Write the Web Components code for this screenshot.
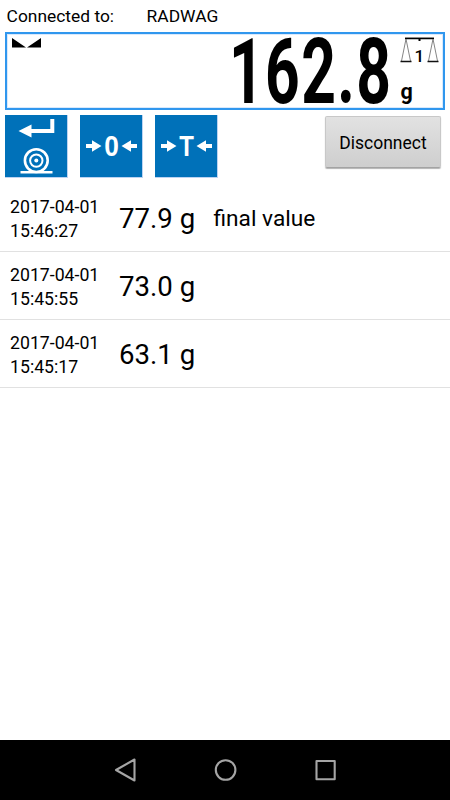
<!DOCTYPE html>
<html lang="en">
<head>
<meta charset="utf-8">
<title>Scale terminal</title>
<style>
    body {
        margin: 0;
        background: #fff;
        color: #000;
        font-family: Roboto, "Liberation Sans", sans-serif;
    }
</style>
</head>
<body>
<scale-app>
    <connection-bar slot="top" device="RADWAG"></connection-bar>
    <weight-display slot="top" value="162.8" unit="g" platform="1"></weight-display>
    <scale-toolbar slot="top"></scale-toolbar>
    <weight-record date="2017-04-01" time="15:46:27" value="77.9 g">final value</weight-record>
    <weight-record date="2017-04-01" time="15:45:55" value="73.0 g"></weight-record>
    <weight-record date="2017-04-01" time="15:45:17" value="63.1 g"></weight-record>
    <nav-bar slot="nav"></nav-bar>
</scale-app>

<script>
class ScaleApp extends HTMLElement {
    constructor() {
        super();
        this.attachShadow({ mode: 'open' });
        this.shadowRoot.innerHTML = `
            <style>
                :host {
                    display: flex;
                    flex-direction: column;
                    width: 450px;
                    height: 800px;
                    overflow: hidden;
                }
                main { flex: 1; }
            </style>
            <slot name="top"></slot>
            <main><slot></slot></main>
            <slot name="nav"></slot>
        `;
    }
}

class ConnectionBar extends HTMLElement {
    constructor() {
        super();
        this.attachShadow({ mode: 'open' });
    }

    connectedCallback() {
        this.shadowRoot.innerHTML = `
            <style>
                :host {
                    display: grid;
                    grid-template-columns: 140px 1fr;
                    box-sizing: border-box;
                    height: 32px;
                    padding: 6px 0 0 6.6px;
                    font-size: 17.4px;
                    line-height: 20px;
                }
            </style>
            <span>Connected to:</span>
            <span>${this.getAttribute('device')}</span>
        `;
    }
}

class WeightDisplay extends HTMLElement {
    constructor() {
        super();
        this.attachShadow({ mode: 'open' });
    }

    connectedCallback() {
        this.shadowRoot.innerHTML = `
            <style>
                :host {
                    display: flex;
                    box-sizing: border-box;
                    height: 78px;
                    margin: 0 5px;
                    border: 2px solid #3097ee;
                    box-shadow: inset 0 0 0 1px #d9e9fc;
                }
                svg {
                    display: block;
                    overflow: visible;
                }
                .stable { margin: 4px 0 0 5px; }
                .value { margin-left: auto; }
                .side {
                    display: flex;
                    flex-direction: column;
                    width: 44px;
                }
                .side svg { margin-top: 2px; }
                .unit {
                    margin-top: 16px;
                    padding-left: 1.5px;
                    font-size: 21.5px;
                    font-weight: 700;
                    line-height: 24px;
                }
            </style>
            <svg class="stable" width="29" height="10" viewBox="0 0 29 10">
                <path d="M0 0L14 9.5H0zM29 0V9.5H15z"/>
            </svg>
            <svg class="value" width="172" height="74" viewBox="0 0 172 74">
                <text transform="translate(2 69) scale(.665 1)" font-size="91" font-weight="750"
                    letter-spacing="2.1">${this.getAttribute('value')}</text>
            </svg>
            <div class="side">
                <svg width="42" height="28" viewBox="0 0 42 28">
                    <path d="M6 2.4H35" stroke="#000" stroke-width="1.7"/>
                    <path d="M19.5 2h2v3h-2z"/>
                    <path d="M7 3L2.5 25M7 3L11.5 25M34 3L29.5 25M34 3L38.5 25" fill="none" stroke="#777" stroke-width=".9"/>
                    <path d="M1.5 25.5H12.5M28.5 25.5H39.5" stroke="#111" stroke-width="1.3"/>
                    <text x="15.5" y="25.8" font-size="17" font-weight="500">${this.getAttribute('platform')}</text>
                </svg>
                <span class="unit">${this.getAttribute('unit')}</span>
            </div>
        `;
    }
}

class ScaleToolbar extends HTMLElement {
    constructor() {
        super();
        this.attachShadow({ mode: 'open' });
        this.shadowRoot.innerHTML = `
            <style>
                :host {
                    display: flex;
                    gap: 12px;
                    box-sizing: border-box;
                    height: 74px;
                    padding: 5px 9px 0 5px;
                }
                .disconnect {
                    box-sizing: border-box;
                    width: 116px;
                    height: 52px;
                    margin: 1px 0 0 auto;
                    padding: 2px 0 0;
                    border: 1px solid #c8c8c8;
                    border-bottom-color: #a3a3a3;
                    border-radius: 2px;
                    background: linear-gradient(#e2e2e2, #cecece);
                    box-shadow: 0 1px 1px rgba(0, 0, 0, .3);
                    color: #000;
                    font: 17.5px/48px Roboto, sans-serif;
                }
            </style>
            <tool-button>
                <svg width="62" height="62" viewBox="0 0 62 62">
                    <path d="M47.3 4V16H26" fill="none" stroke="#fff" stroke-width="4"/>
                    <path d="M13.5 16L26.5 9.5V22.5z" fill="#fff"/>
                    <g fill="none" stroke="#fff" stroke-width="2.6">
                        <circle cx="31.3" cy="45.6" r="11.4"/>
                        <circle cx="31.3" cy="45.6" r="6.2" stroke-width="2"/>
                        <path d="M15.5 57.2H47.5"/>
                    </g>
                    <circle cx="31.3" cy="45.6" r="2" fill="#fff"/>
                </svg>
            </tool-button>
            <tool-button label="0"></tool-button>
            <tool-button label="T"></tool-button>
            <button class="disconnect">Disconnect</button>
        `;
    }
}

// Blue key; with a label it draws the two arrows pointing at it
class ToolButton extends HTMLElement {
    constructor() {
        super();
        this.attachShadow({ mode: 'open' });
    }

    connectedCallback() {
        const label = this.getAttribute('label');
        const arrows = `
            <svg width="62" height="62" viewBox="0 0 62 62">
                <g fill="#fff">
                    <path d="M6 29H12V25.3L21.5 31L12 36.7V33H6z"/>
                    <path d="M57 29H51V25.3L41.5 31L51 36.7V33H57z"/>
                    <text x="24.2" y="41.2" textLength="14.6" lengthAdjust="spacingAndGlyphs"
                        font-family="Liberation Sans" font-size="29.5" font-weight="700">${label}</text>
                </g>
            </svg>`;
        this.shadowRoot.innerHTML = `
            <style>
                :host {
                    display: block;
                    width: 62px;
                    height: 62px;
                    border-right: 1px solid #bcd3f2;
                    border-bottom: 1px solid #bcd3f2;
                    background: #0071b9;
                }
                svg { display: block; }
            </style>
            ${label ? arrows : '<slot></slot>'}
        `;
    }
}

class WeightRecord extends HTMLElement {
    constructor() {
        super();
        this.attachShadow({ mode: 'open' });
    }

    connectedCallback() {
        this.shadowRoot.innerHTML = `
            <style>
                :host {
                    display: grid;
                    grid-template-columns: 109px 94.5px 1fr;
                    align-items: center;
                    box-sizing: border-box;
                    height: 68px;
                    padding: 2px 0 0 10px;
                    border-bottom: 1px solid #e1e1e1;
                }
                .stamp {
                    font-size: 17.7px;
                    line-height: 24px;
                }
                .value { font-size: 27.6px; }
                .note { font-size: 22.7px; }
            </style>
            <div class="stamp">
                <div>${this.getAttribute('date')}</div>
                <div>${this.getAttribute('time')}</div>
            </div>
            <span class="value">${this.getAttribute('value')}</span>
            <span class="note"><slot></slot></span>
        `;
    }
}

class NavBar extends HTMLElement {
    constructor() {
        super();
        this.attachShadow({ mode: 'open' });
        this.shadowRoot.innerHTML = `
            <style>
                :host {
                    display: flex;
                    justify-content: center;
                    align-items: center;
                    gap: 76px;
                    height: 60px;
                    background: #000;
                }
                svg {
                    fill: none;
                    stroke: #a5a5a5;
                    stroke-width: 2.1;
                    stroke-linejoin: round;
                }
            </style>
            <svg width="24" height="24" viewBox="0 0 24 24"><path d="M3 12L21.5 1.5V22.5z"/></svg>
            <svg width="24" height="24" viewBox="0 0 24 24"><circle cx="12.6" cy="12" r="9.8"/></svg>
            <svg width="24" height="24" viewBox="0 0 24 24"><path d="M3.5 3H21.7V21.2H3.5z"/></svg>
        `;
    }
}

customElements.define('scale-app', ScaleApp);
customElements.define('connection-bar', ConnectionBar);
customElements.define('weight-display', WeightDisplay);
customElements.define('tool-button', ToolButton);
customElements.define('scale-toolbar', ScaleToolbar);
customElements.define('weight-record', WeightRecord);
customElements.define('nav-bar', NavBar);
</script>
</body>
</html>
